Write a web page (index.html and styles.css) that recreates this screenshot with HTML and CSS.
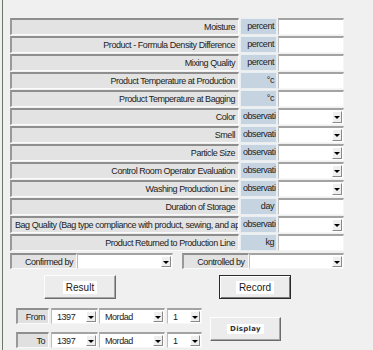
FILE: index.html
```html
<!DOCTYPE html>
<html lang="en">

<head>
    <link rel="stylesheet" href="styles.css">
</head>

<body>
    <div class="frame">
        <div class="grid">
            <div class="label">Moisture</div>
            <div class="unit">percent</div>
            <div class="field"></div>

            <div class="label">Product - Formula Density Difference</div>
            <div class="unit">percent</div>
            <div class="field"></div>

            <div class="label">Mixing Quality</div>
            <div class="unit">percent</div>
            <div class="field"></div>

            <div class="label">Product Temperature at Production</div>
            <div class="unit">&deg;c</div>
            <div class="field"></div>

            <div class="label">Product Temperature at Bagging</div>
            <div class="unit">&deg;c</div>
            <div class="field"></div>

            <div class="label">Color</div>
            <div class="unit unit-left">observation</div>
            <div class="field combo"><span class="arrow"></span></div>

            <div class="label">Smell</div>
            <div class="unit unit-left">observation</div>
            <div class="field combo"><span class="arrow"></span></div>

            <div class="label">Particle Size</div>
            <div class="unit unit-left">observation</div>
            <div class="field combo"><span class="arrow"></span></div>

            <div class="label">Control Room Operator Evaluation</div>
            <div class="unit unit-left">observation</div>
            <div class="field combo"><span class="arrow"></span></div>

            <div class="label">Washing Production Line</div>
            <div class="unit unit-left">observation</div>
            <div class="field combo"><span class="arrow"></span></div>

            <div class="label">Duration of Storage</div>
            <div class="unit">day</div>
            <div class="field"></div>

            <div class="label label-left">Bag Quality (Bag type compliance with product, sewing, and appearance)</div>
            <div class="unit unit-left">observation</div>
            <div class="field combo"><span class="arrow"></span></div>

            <div class="label">Product Returned to Production Line</div>
            <div class="unit">kg</div>
            <div class="field"></div>
        </div>

        <div class="sign-row">
            <div class="sign">
                <div class="box-label">Confirmed by</div>
                <div class="field combo"><span class="arrow"></span></div>
            </div>
            <div class="sign">
                <div class="box-label">Controlled by</div>
                <div class="field combo"><span class="arrow"></span></div>
            </div>
        </div>

        <div class="btn-row">
            <button class="btn btn-result"><span>Result</span></button>
            <button class="btn btn-record"><span>Record</span></button>
        </div>

        <div class="period">
            <div class="period-rows">
                <div class="period-row">
                    <div class="box-label period-label">From</div>
                    <div class="field combo year">1397<span class="arrow"></span></div>
                    <div class="field combo month">Mordad<span class="arrow"></span></div>
                    <div class="field combo day">1<span class="arrow"></span></div>
                </div>
                <div class="period-row">
                    <div class="box-label period-label">To</div>
                    <div class="field combo year">1397<span class="arrow"></span></div>
                    <div class="field combo month">Mordad<span class="arrow"></span></div>
                    <div class="field combo day">1<span class="arrow"></span></div>
                </div>
            </div>
            <button class="btn btn-display"><span>Display</span></button>
        </div>
    </div>
</body>
</html>
```

FILE: styles.css
```css
html,
body {
    margin: 0;
    height: 100%;
    background: #f0f0f0;
}

body {
    font-family: "Liberation Sans", Arial, sans-serif;
    font-size: 9px;
    letter-spacing: -0.45px;
    color: #222;
    overflow: hidden;
}

.frame {
    margin-left: 2px;
    min-height: 100%;
    box-sizing: border-box;
    border-left: 1px solid #6d7968;
    padding: 18px 0 0 7px;
}

.grid {
    display: grid;
    grid-template-columns: 229px 37px 66px;
    grid-auto-rows: 17px;
    column-gap: 1px;
    row-gap: 1px;
}

.label,
.box-label {
    box-sizing: border-box;
    background: #e3e3e3;
    border-top: 2px solid #8e8e8e;
    border-left: 2px solid #999;
    border-right: 1px solid #fafafa;
    border-bottom: 1px solid #fafafa;
    padding: 0 3px;
    text-align: right;
    line-height: 14px;
    white-space: nowrap;
    overflow: hidden;
}

.label-left {
    text-align: left;
}

.unit {
    box-sizing: border-box;
    background: #c6d3e0;
    border: 1px solid #e9eef3;
    padding: 0 2px;
    text-align: right;
    line-height: 15px;
    white-space: nowrap;
    overflow: hidden;
}

.unit-left {
    text-align: left;
}

.field {
    position: relative;
    box-sizing: border-box;
    background: #fff;
    border-top: 2px solid #a3a3a3;
    border-left: 1px solid #bdbdbd;
    border-right: 1px solid #f6f6f6;
    border-bottom: 1px solid #f6f6f6;
    padding-left: 5px;
    line-height: 14px;
    white-space: nowrap;
}

.arrow {
    position: absolute;
    right: 1px;
    top: 1px;
    bottom: 1px;
    width: 10px;
    box-sizing: border-box;
    background: #efefef;
    border-right: 1px solid #8a8a8a;
    border-bottom: 1px solid #8a8a8a;
    border-top: 1px solid #fff;
    border-left: 1px solid #fff;
}

.arrow::after {
    content: "";
    position: absolute;
    left: 1px;
    top: 50%;
    margin-top: -1px;
    border-left: 3px solid transparent;
    border-right: 3px solid transparent;
    border-top: 3px solid #000;
}

.sign-row {
    display: flex;
    gap: 9px;
    margin-top: 2px;
    width: 334px;
}

.sign {
    display: flex;
    flex: 1;
    height: 16px;
}

.sign .box-label {
    width: 67px;
    flex: none;
}

.sign .field {
    flex: 1;
}

.btn-row {
    display: flex;
    margin-top: 6px;
}

.btn {
    box-sizing: border-box;
    width: 72px;
    height: 24px;
    padding: 0;
    background: #ececec;
    border: 1px solid;
    border-color: #fdfdfd #6b6b6b #6b6b6b #fdfdfd;
    box-shadow: inset -1px -1px 0 #a6a6a6;
    font-family: "Liberation Sans", Arial, sans-serif;
    font-size: 10px;
    letter-spacing: 0;
    color: #1a1a1a;
}

.btn span {
    background: #fff;
    padding: 1px 3px;
}

.btn-result {
    margin-left: 34px;
}

.btn-record {
    margin-left: 103px;
    border: 1px solid #2a2a2a;
    box-shadow: inset 1px 1px 0 #fdfdfd, inset -1px -1px 0 #7a7a7a;
}

.period {
    display: flex;
    margin-top: 9px;
}

.period-rows {
    display: flex;
    flex-direction: column;
    gap: 8px;
    margin-left: 6px;
}

.period-row {
    display: flex;
    gap: 1px;
    height: 16px;
}

.period-label {
    width: 33px;
    background: #e0e0e0;
}

.year {
    width: 47px;
    margin-left: 1px;
}

.month {
    width: 66px;
}

.day {
    width: 35px;
    margin-left: 1px;
}

.btn-display {
    margin: 9px 0 0 8px;
    width: 71px;
    height: 24px;
    font-family: "DejaVu Sans", sans-serif;
    font-size: 7px;
    font-weight: bold;
    letter-spacing: 0.3px;
    color: #333;
}
```
